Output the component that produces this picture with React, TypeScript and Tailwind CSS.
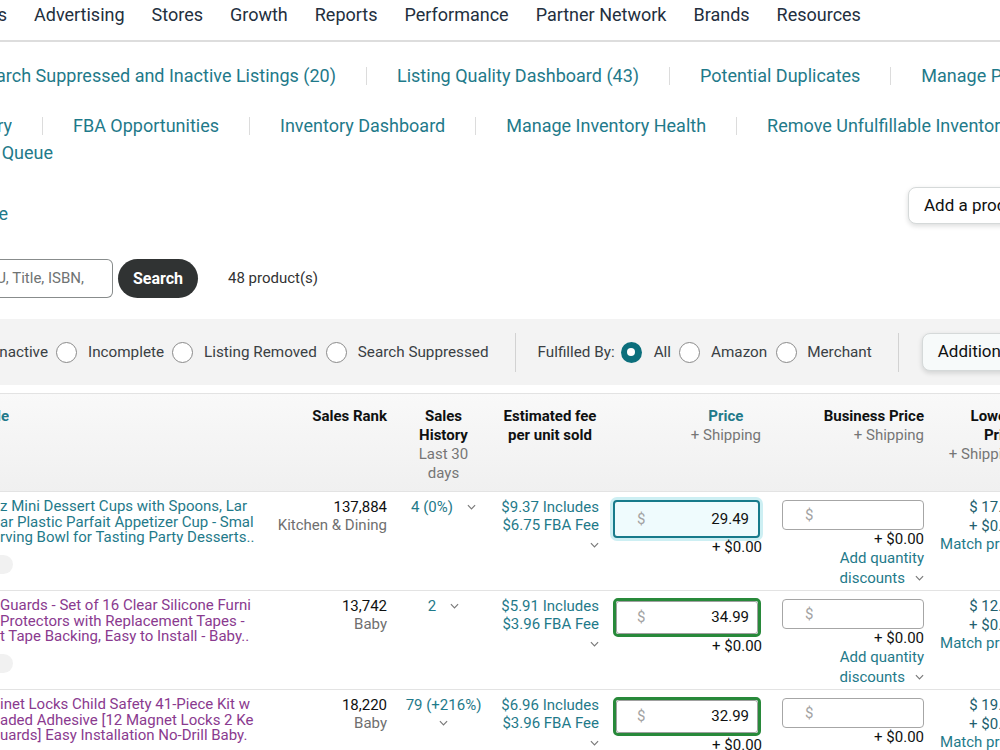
import React from 'react';

// right-aligned clipped text, for items cut off at the left edge
function Clip({ w, children, className = '' }: { w: string; children: React.ReactNode; className?: string }) {
  return (
    <div className={`${w} shrink-0 overflow-hidden flex justify-end whitespace-nowrap ${className}`}>
      <span className="shrink-0">{children}</span>
    </div>
  );
}

function Chevron({ className = '' }: { className?: string }) {
  return (
    <svg viewBox="0 0 10 6" className={`w-[9px] h-[6px] ${className}`} fill="none" stroke="#7a7a7a" strokeWidth="1.3">
      <path d="M1 1l4 4 4-4" />
    </svg>
  );
}

function Radio({ checked = false, className = '' }: { checked?: boolean; className?: string }) {
  if (checked) {
    return (
      <span className={`w-[21px] h-[21px] shrink-0 rounded-full bg-[#0c6f7c] flex items-center justify-center ${className}`}>
        <span className="w-[8px] h-[8px] rounded-full bg-white" />
      </span>
    );
  }
  return <span className={`w-[21px] h-[21px] shrink-0 rounded-full border border-[#8a8a8a] bg-white ${className}`} />;
}

const Sep = () => <span className="w-px h-[18px] bg-[#dcdcdc] shrink-0" />;

const rows = [
  {
    lines: ['z Mini Dessert Cups with Spoons, Lar', 'ar Plastic Parfait Appetizer Cup - Smal', 'rving Bowl for Tasting Party Desserts..'],
    visited: false,
    rank: '137,884',
    cat: 'Kitchen & Dining',
    hist: '4 (0%)',
    wrap: false,
    fee: '$9.37',
    fba: '$6.75',
    price: '29.49',
    focused: true,
    low: '$ 17.37',
  },
  {
    lines: ['Guards - Set of 16 Clear Silicone Furni', 'Protectors with Replacement Tapes -', 't Tape Backing, Easy to Install - Baby..'],
    visited: true,
    rank: '13,742',
    cat: 'Baby',
    hist: '2',
    wrap: false,
    fee: '$5.91',
    fba: '$3.96',
    price: '34.99',
    focused: false,
    low: '$ 12.99',
  },
  {
    lines: ['inet Locks Child Safety 41-Piece Kit w', 'aded Adhesive [12 Magnet Locks 2 Ke', 'uards] Easy Installation No-Drill Baby.'],
    visited: true,
    rank: '18,220',
    cat: 'Baby',
    hist: '79 (+216%)',
    wrap: true,
    fee: '$6.96',
    fba: '$3.96',
    price: '32.99',
    focused: false,
    low: '$ 19.99',
  },
];

const cols = 'grid grid-cols-[262px_130px_103px_110px_165px_160px_100px] w-[1030px]';

export default function App() {
  return (
    <div className="w-[1000px] h-[750px] overflow-hidden bg-white font-['Roboto',sans-serif] text-[#0f1111]">
      {/* top nav */}
      <div className="h-[42px] border-b-2 border-[#dddddd] flex items-start pt-[3px] gap-[27px] text-[18px] leading-[24px] text-[#232f3e] whitespace-nowrap">
        <Clip w="w-[7px]">Orders</Clip>
        <span>Advertising</span>
        <span>Stores</span>
        <span>Growth</span>
        <span>Reports</span>
        <span>Performance</span>
        <span>Partner Network</span>
        <span>Brands</span>
        <span>Resources</span>
      </div>

      {/* link rows */}
      <div className="mt-[22px] h-[24px] flex items-center gap-[30px] text-[18px] leading-[24px] text-[#1f7a8a] whitespace-nowrap">
        <Clip w="w-[336px]">Search Suppressed and Inactive Listings (20)</Clip>
        <Sep />
        <span>Listing Quality Dashboard (43)</span>
        <Sep />
        <span>Potential Duplicates</span>
        <Sep />
        <span>Manage Pricing</span>
      </div>
      <div className="mt-[26px] h-[24px] flex items-center gap-[30px] text-[18px] leading-[24px] text-[#1f7a8a] whitespace-nowrap">
        <Clip w="w-[12px]">Manage FBA Inventory</Clip>
        <Sep />
        <span>FBA Opportunities</span>
        <Sep />
        <span>Inventory Dashboard</span>
        <Sep />
        <span>Manage Inventory Health</span>
        <Sep />
        <span>Remove Unfulfillable Inventory</span>
      </div>
      <div className="mt-[3px] h-[24px] flex items-center text-[18px] leading-[24px] text-[#1f7a8a]">
        <Clip w="w-[53px]">Removal Queue</Clip>
      </div>

      {/* preferences + add product */}
      <div className="mt-[22px] flex items-start">
        <Clip w="w-[8px]" className="mt-[16px] text-[18px] leading-[22px] text-[#1f7a8a]">
          Preference
        </Clip>
        <button className="ml-auto -mr-[58px] w-[150px] h-[37px] shrink-0 rounded-[8px] border border-[#d5d9d9] bg-white shadow-[0_2px_5px_rgba(15,17,17,0.15)] text-left px-[15px] text-[17px] text-[#0f1111] whitespace-nowrap">
          Add a product
        </button>
      </div>

      {/* search */}
      <div className="mt-[34px] flex items-center">
        <div className="w-[113px] h-[39px] shrink-0 border border-l-0 border-[#888c8c] rounded-r-[6px] flex items-center justify-end overflow-hidden pr-[28px] whitespace-nowrap">
          <span className="shrink-0 text-[15px] text-[#6f7373]">SKU, Title, ISBN,</span>
        </div>
        <button className="ml-[5px] w-[80px] h-[39px] rounded-full bg-[#303333] text-white font-bold text-[16px]">Search</button>
        <span className="ml-[30px] text-[15px] text-[#333333]">48 product(s)</span>
      </div>

      {/* filter bar */}
      <div className="mt-[21px] h-[66px] bg-[#f3f3f3] flex items-center text-[15.25px] text-[#3a3f44] whitespace-nowrap">
        <Clip w="w-[48px]">Inactive</Clip>
        <Radio className="ml-[8px]" />
        <span className="ml-[11px]">Incomplete</span>
        <Radio className="ml-[8px]" />
        <span className="ml-[11px]">Listing Removed</span>
        <Radio className="ml-[9px]" />
        <span className="ml-[11px]">Search Suppressed</span>
        <span className="ml-[26px] w-px h-[39px] shrink-0 bg-[#d2d2d2]" />
        <span className="ml-[22px]">Fulfilled By:</span>
        <Radio checked className="ml-[6px]" />
        <span className="ml-[12px]">All</span>
        <Radio className="ml-[8px]" />
        <span className="ml-[11px]">Amazon</span>
        <Radio className="ml-[9px]" />
        <span className="ml-[10px]">Merchant</span>
        <span className="ml-[26px] w-px h-[39px] shrink-0 bg-[#d2d2d2]" />
        <button className="ml-[23px] h-[38px] shrink-0 px-[15px] rounded-[8px] border border-[#d5d9d9] bg-[#f7fafa] shadow-[0_2px_5px_rgba(15,17,17,0.15)] text-[17px] text-[#0f1111]">
          Additional filters
        </button>
      </div>

      {/* table header */}
      <div className={`${cols} mt-[8px] h-[99px] border-t border-b border-[#e3e3e3] bg-linear-to-b from-[#f9f9f9] to-[#f0f0f0] pt-[13px] text-[15px] leading-[19px]`}>
        <Clip w="w-[9px]" className="font-bold text-[#1f7a8a]">
          Title
        </Clip>
        <div className="text-right pr-[5px] font-bold">Sales Rank</div>
        <div className="text-center">
          <div className="font-bold">
            Sales
            <br />
            History
          </div>
          <div className="text-[#767676]">
            Last 30
            <br />
            days
          </div>
        </div>
        <div className="text-center font-bold">
          Estimated fee
          <br />
          per unit sold
        </div>
        <div className="flex justify-end pr-[9px]">
          <div className="text-center">
            <div className="font-bold text-[#1f7a8a]">Price</div>
            <div className="text-[#767676]">+ Shipping</div>
          </div>
        </div>
        <div className="text-right pr-[6px]">
          <div className="font-bold">Business Price</div>
          <div className="text-[#767676]">+ Shipping</div>
        </div>
        <div className="text-right pr-[11px]">
          <div className="font-bold">
            Lowest
            <br />
            Price
          </div>
          <div className="text-[#767676]">+ Shipping</div>
        </div>
      </div>

      {/* rows */}
      {rows.map((r) => (
        <div key={r.rank} className={`${cols} h-[99px] border-b border-[#e3e3e3] text-[15px]`}>
          <div className="pt-[7px] w-[260px] overflow-hidden">
            {r.lines.map((l) => (
              <div key={l} className={`whitespace-nowrap leading-[15.5px] ${r.visited ? 'text-[#8a3a8f]' : 'text-[#1f7a8a]'}`}>
                {l}
              </div>
            ))}
            <div className="mt-[9px] -ml-[17px] w-[30px] h-[19px] rounded-full bg-[#f1f1f1]" />
          </div>
          <div className="pt-[6px] pr-[5px] text-right leading-[18px]">
            <div>{r.rank}</div>
            <div className="text-[#6f6f6f]">{r.cat}</div>
          </div>
          <div className="pt-[6px] text-center leading-[18px] text-[#1f7a8a]">
            {r.wrap ? (
              <>
                <div>{r.hist}</div>
                <div className="flex justify-center pt-[6px]">
                  <Chevron />
                </div>
              </>
            ) : (
              <div className="flex items-center justify-center">
                <span>{r.hist}</span>
                <Chevron className="ml-[14px]" />
              </div>
            )}
          </div>
          <div className="pt-[6px] pr-[6px] text-right leading-[18px] text-[#1f7a8a]">
            <div>{r.fee} Includes</div>
            <div>{r.fba} FBA Fee</div>
            <div className="flex justify-end pt-[8px]">
              <Chevron />
            </div>
          </div>
          <div className="pl-[8px] pt-[7px]">
            <div className="w-[149px] flex flex-col items-end">
              {r.focused ? (
                <div className="mt-[1px] w-[147px] h-[38px] self-start rounded-[4px] border-2 border-[#177a8a] bg-[#effbfd] shadow-[0_0_0_3px_#cdeff3] flex items-center justify-between pl-[22px] pr-[9px]">
                  <span className="text-[#a3a3a3]">$</span>
                  <span>{r.price}</span>
                </div>
              ) : (
                <div className="w-[148px] h-[39px] self-start rounded-[5px] border-[3px] border-[#28893a]">
                  <div className="h-full rounded-[3px] border border-[#a0a0a0] bg-white flex items-center justify-between pl-[20px] pr-[8px]">
                    <span className="text-[#a3a3a3]">$</span>
                    <span>{r.price}</span>
                  </div>
                </div>
              )}
              <div className="leading-[18px]">+ $0.00</div>
            </div>
          </div>
          <div className="pt-[8px] pl-[12px] pr-[6px] flex flex-col items-end">
            <div className="w-[142px] h-[30px] border border-[#a6a6a6] rounded-[4px] flex items-center pl-[22px] text-[#a3a3a3]">$</div>
            <div className="leading-[18px]">+ $0.00</div>
            <div className="leading-[20px] text-[#1f7a8a] text-right">
              Add quantity
              <div className="flex items-center justify-end">
                discounts
                <Chevron className="ml-[10px]" />
              </div>
            </div>
          </div>
          <div className="pt-[6px] pr-[11px] text-right leading-[18.5px] whitespace-nowrap">
            <div className="text-[#22606e]">{r.low}</div>
            <div className="text-[#22606e]">+ $0.00</div>
            <div className="text-[#1f7a8a]">Match price</div>
          </div>
        </div>
      ))}
    </div>
  );
}
